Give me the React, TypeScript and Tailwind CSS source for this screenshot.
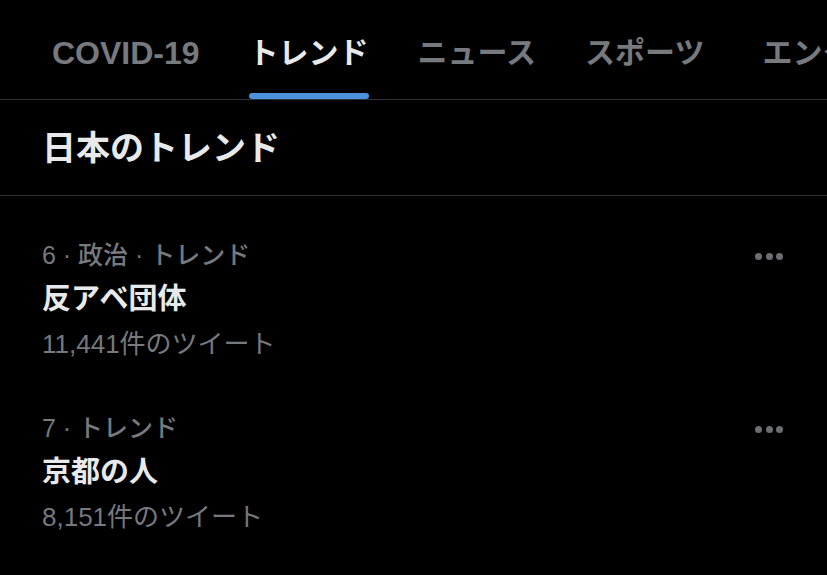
const tabs = [
  { label: "COVID-19", latin: true },
  { label: "トレンド", active: true },
  { label: "ニュース" },
  { label: "スポーツ" },
  { label: "エンタメ", extra: true },
]

const trends = [
  { meta: "6 · 政治 · トレンド", title: "反アベ団体", count: "11,441件のツイート" },
  { meta: "7 · トレンド", title: "京都の人", count: "8,151件のツイート" },
]

function MoreDots() {
  return (
    <div className="flex items-center gap-[3.5px]">
      <span className="w-[7px] h-[7px] rounded-full bg-[#6b6e72]" />
      <span className="w-[7px] h-[7px] rounded-full bg-[#6b6e72]" />
      <span className="w-[7px] h-[7px] rounded-full bg-[#6b6e72]" />
    </div>
  )
}

export default function App() {
  return (
    <div
      className="w-[827px] h-[575px] overflow-hidden bg-black text-[#e7e9ea]"
      style={{ fontFamily: '"Liberation Sans", "Noto Sans CJK JP", sans-serif' }}
    >
      {/* Tabs */}
      <nav className="flex h-[100px] gap-[49px] pl-[52px] border-b border-[#2f3134] whitespace-nowrap overflow-hidden">
        {tabs.map((tab) => (
          <div
            key={tab.label}
            className={`flex flex-col h-full shrink-0 ${tab.extra ? "ml-[9px]" : ""}`}
          >
            <span
              className={`mt-[36px] leading-[34px] font-bold ${
                tab.latin ? "text-[32px]" : "text-[30px]"
              } ${tab.active ? "text-[#e7e9ea]" : "text-[#76797d]"}`}
            >
              {tab.label}
            </span>
            <div
              className={`mt-auto h-[6px] rounded-full ${
                tab.active ? "bg-[#4b91dc]" : "bg-transparent"
              }`}
            />
          </div>
        ))}
      </nav>

      {/* Section header */}
      <div className="h-[96px] flex items-center px-[42px] border-b border-[#2f3134]">
        <h1 className="text-[34px] font-bold leading-none">日本のトレンド</h1>
      </div>

      {/* Trend list */}
      <div className="flex flex-col gap-[40px] pt-[38px] px-[42px] pr-[44px]">
        {trends.map((t) => (
          <div key={t.title} className="flex flex-col">
            <div className="h-[44px] flex items-center justify-between">
              <span className="text-[25px] font-medium text-[#76797d]">{t.meta}</span>
              <MoreDots />
            </div>
            <div className="h-[44px] flex items-center">
              <span className="text-[29px] font-bold">{t.title}</span>
            </div>
            <div className="h-[45px] flex items-center">
              <span className="text-[26px] text-[#76797d]">{t.count}</span>
            </div>
          </div>
        ))}
      </div>
    </div>
  )
}
